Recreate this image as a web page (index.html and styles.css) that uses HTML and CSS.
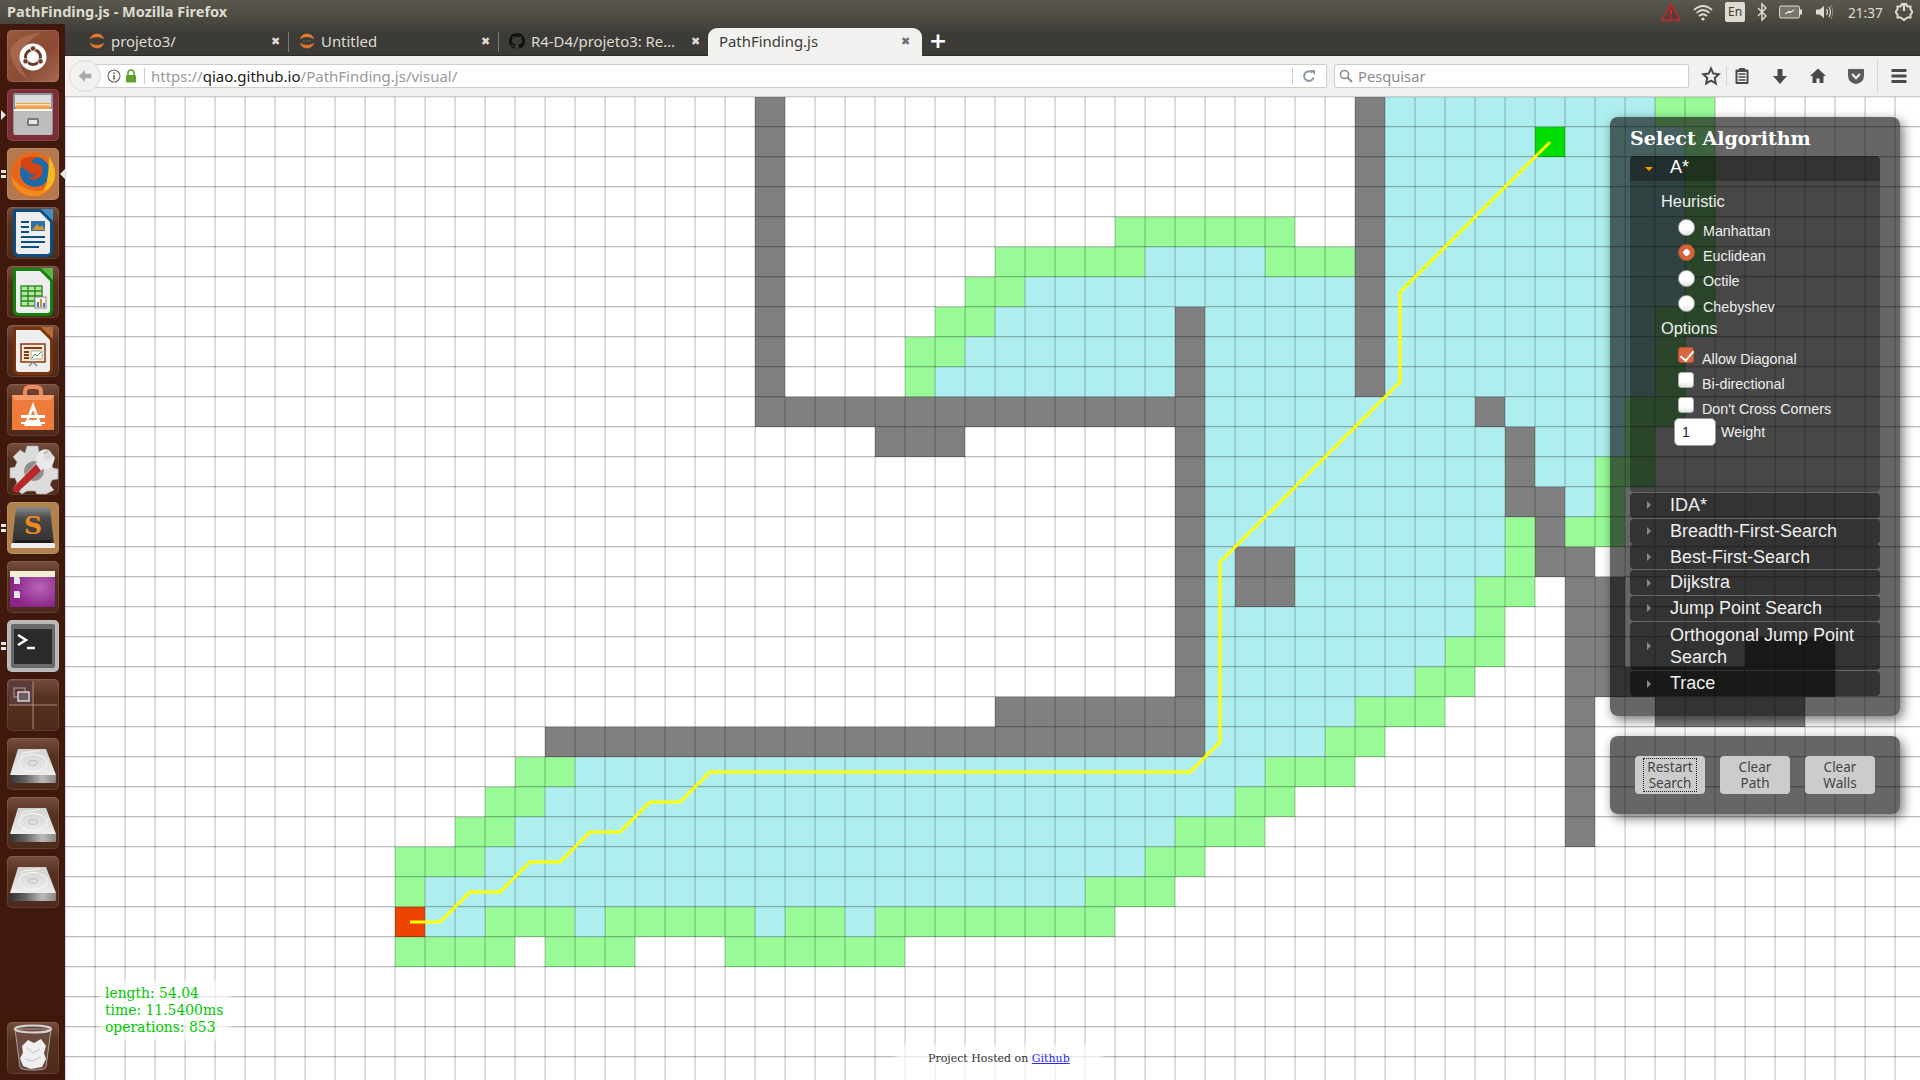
FILE: index.html
```html
<!DOCTYPE html>
<html lang="pt">
<head>
<meta charset="utf-8">
<title>PathFinding.js - Mozilla Firefox</title>
<link rel="stylesheet" href="styles.css">
</head>
<body>
<svg class="defs" width="0" height="0">
  <defs>
    <linearGradient id="diskTop" x1="0" y1="0" x2="0" y2="1"><stop offset="0" stop-color="#d2d2d0"/><stop offset="1" stop-color="#ededeb"/></linearGradient>
    <linearGradient id="diskFront" x1="0" y1="0" x2="1" y2="0"><stop offset="0" stop-color="#333"/><stop offset=".35" stop-color="#666"/><stop offset=".7" stop-color="#bbb"/><stop offset="1" stop-color="#888"/></linearGradient>
    <radialGradient id="purpleGlow" cx=".65" cy=".45" r=".6"><stop offset="0" stop-color="#b964b6"/><stop offset="1" stop-color="#8a2489"/></radialGradient>
    <linearGradient id="boxGrad" x1="0" y1="0" x2="0" y2="1"><stop offset="0" stop-color="#8a8a8a"/><stop offset=".3" stop-color="#4a4a4a"/><stop offset="1" stop-color="#2e2e2e"/></linearGradient>
    <symbol id="disk" viewBox="0 0 52 52">
      <path d="M11 11H39L49 37H3Z" fill="url(#diskTop)"/>
      <path d="M3 37H49V43.500Q49 45 47.500 45H4.500Q3 45 3 43.500Z" fill="url(#diskFront)"/>
      <ellipse cx="26" cy="25" rx="14" ry="8.500" fill="none" stroke="#f8f8f8" stroke-width="1"/>
      <ellipse cx="26" cy="25" rx="4.500" ry="2.300" fill="none" stroke="#bdbdbd" stroke-width="1"/>
      <path d="M15 20Q13 14 22 14T33 12" fill="none" stroke="#f7f7f7"/>
    </symbol>
    <symbol id="tabring" viewBox="0 0 16 16">
      <path d="M1.500 5.500A7 7 0 0 1 14.500 5.500A9 6 0 0 0 1.500 5.500Z" fill="#e8772e" stroke="#e8772e" stroke-width=".8"/>
      <path d="M1.500 10.500A7 7 0 0 0 14.500 10.500A9 6 0 0 1 1.500 10.500Z" fill="#e8772e" stroke="#e8772e" stroke-width=".8"/>
    </symbol>
    <pattern id="gridlines" width="30" height="30" patternUnits="userSpaceOnUse">
      <rect x="0" y="0" width="1" height="30" fill="#000" fill-opacity=".15"/>
      <rect x="29" y="0" width="1" height="30" fill="#000" fill-opacity=".12"/>
      <rect x="0" y="0" width="30" height="1" fill="#000" fill-opacity=".08"/>
      <rect x="0" y="29" width="30" height="1" fill="#000" fill-opacity=".27"/>
    </pattern>
  </defs>
</svg>

<div class="screen">
  <header class="titlebar">
    <span class="window-title">PathFinding.js - Mozilla Firefox</span>
    <div class="indicators">
      <svg class="ind" viewBox="0 0 20 20"><path d="M10 2L19 18H1Z" fill="#5a1a16" fill-opacity=".25" stroke="#d8232a" stroke-width="1.300"/><path d="M10 7V13M10 14.500V16" stroke="#d8232a" stroke-width="1.800"/></svg>
      <svg class="ind" viewBox="0 0 20 20"><path d="M1 8Q10 0 19 8M3.500 11Q10 5 16.500 11M6 14Q10 10.500 14 14" fill="none" stroke="#dfdbd2" stroke-width="1.700"/><circle cx="10" cy="17" r="1.600" fill="#dfdbd2"/></svg>
      <span class="lang">En</span>
      <svg class="ind-bt" viewBox="0 0 10 20"><path d="M1 6L9 14L5 18V2L9 6L1 14" fill="none" stroke="#dfdbd2" stroke-width="1.500"/></svg>
      <svg class="ind-bat" viewBox="0 0 23 14"><rect x=".5" y="1" width="20" height="12" rx="1.500" fill="#77756c" stroke="#dfdbd2"/><rect x="21" y="4.500" width="2" height="5" fill="#dfdbd2"/><path d="M6 9L11 6.500V8L15 5L10 7.500V6Z" fill="#fff" stroke="#fff" stroke-width=".6"/></svg>
      <svg class="ind" viewBox="0 0 20 20"><path d="M2 7.500H5.500L10 4V16L5.500 12.500H2Z" fill="#dfdbd2"/><path d="M12.500 7Q14.500 10 12.500 13M15 5Q18 10 15 15" fill="none" stroke="#dfdbd2" stroke-width="1.200"/><path d="M17 3Q20.500 10 17 17" fill="none" stroke="#8e8b82"/></svg>
      <span class="clock">21:37</span>
      <svg class="ind-pow" viewBox="0 0 18 20"><path d="M9 3.500L11 2L12.500 4.500L15.500 4.500L15.500 7.500L17.500 10L15.500 12.500L15.500 15.500L12.500 15.500L9 18L5.500 15.500L2.500 15.500L2.500 12.500L.5 10L2.500 7.500L2.500 4.500L5.500 4.500L7 2Z" fill="none" stroke="#dfdbd2" stroke-width="2"/><path d="M9 1V9" stroke="#dfdbd2" stroke-width="2.200"/></svg>
    </div>
  </header>

  <div class="below">
    <nav class="launcher">
      <div class="tile tile-dash">
        <svg viewBox="0 0 52 52"><path d="M3 20Q12 4 34 3Q20 10 14 24Q10 38 22 49Q6 42 3 20Z" fill="#b57a60" fill-opacity=".55"/><circle cx="26" cy="27" r="13.500" fill="#fff"/><circle cx="26" cy="27" r="7.500" fill="none" stroke="#6d3a26" stroke-width="3"/><circle cx="26" cy="18.500" r="2.700" fill="#6d3a26" stroke="#fff" stroke-width=".8"/><circle cx="18.500" cy="31.300" r="2.700" fill="#6d3a26" stroke="#fff" stroke-width=".8"/><circle cx="33.500" cy="31.300" r="2.700" fill="#6d3a26" stroke="#fff" stroke-width=".8"/></svg>
      </div>
      <div class="tile tile-files pip-left">
        <svg viewBox="0 0 52 52"><rect x="6" y="4" width="40" height="42" rx="2" fill="#8f9092"/><rect x="8" y="6" width="36" height="12" fill="#dcdcdc"/><rect x="9" y="14" width="34" height="6" fill="#f0a050"/><rect x="9" y="15" width="34" height="1.500" fill="#ffe0b0"/><path d="M7 21H45V44Q45 46 43 46H9Q7 46 7 44Z" fill="#bdbdbb"/><rect x="7" y="20" width="38" height="2" fill="#f5f5f5"/><rect x="20" y="29" width="12" height="8" rx="1.500" fill="#77787a"/><rect x="22" y="31" width="8" height="4" fill="#e8e8e8"/></svg>
      </div>
      <div class="tile tile-fox pip-pair pip-right">
        <svg viewBox="0 0 52 52"><circle cx="26" cy="26.500" r="22.500" fill="#e8661a"/><circle cx="28" cy="24" r="15" fill="#1c6aa8"/><path d="M14 12Q21 7 31 9Q24 11 25 15Q34 15 35 20Q37 28 30 31Q24 33 20 29Q26 31 28 27Q21 26 20 22Q13 21 14 12Z" fill="#d34415"/><path d="M42 9Q51 21 47 33Q42 45 30 48Q39 42 40 33Q42 22 42 9Z" fill="#f6b71f"/><path d="M4 28Q6 43 22 48Q34 50 42 41Q30 45 20 41Q10 37 4 28Z" fill="#f18b1d"/></svg>
      </div>
      <div class="tile">
        <svg viewBox="0 0 52 52"><path d="M6 2H34L46 14V44Q46 50 40 50H12Q6 50 6 44Z" fill="#0a4f82"/><path d="M9 5H33L43 15V44Q43 47 40 47H12Q9 47 9 44Z" fill="#eeeeee"/><path d="M34 2H46V14Z" fill="#3f8fc6"/><path d="M14 15H22M14 20H22M14 25H22M14 30H38M14 35H38M14 40H32" stroke="#0a4f82" stroke-width="2"/><rect x="24" y="14" width="14" height="10" fill="#2f6fa8"/><path d="M25 23L30 17L33 20L35 18L38 23Z" fill="#c89a3a"/></svg>
      </div>
      <div class="tile">
        <svg viewBox="0 0 52 52"><path d="M6 2H34L46 14V44Q46 50 40 50H12Q6 50 6 44Z" fill="#14800e"/><path d="M9 5H33L43 15V44Q43 47 40 47H12Q9 47 9 44Z" fill="#eeeeee"/><path d="M34 2H46V14Z" fill="#58b848"/><rect x="14" y="20" width="21" height="20" fill="#bde0a8" stroke="#1b8a12" stroke-width="1.300"/><path d="M14 25H35M14 30H35M14 35H35M21 20V40M28 20V40" stroke="#1b8a12" stroke-width="1.300"/><rect x="28" y="31" width="11" height="11" fill="#f4f4f4" stroke="#888"/><rect x="30" y="36" width="2" height="5" fill="#2f7fc0"/><rect x="33" y="33" width="2" height="8" fill="#e08a20"/><rect x="36" y="37" width="2" height="4" fill="#2f7fc0"/></svg>
      </div>
      <div class="tile">
        <svg viewBox="0 0 52 52"><path d="M6 2H34L46 14V44Q46 50 40 50H12Q6 50 6 44Z" fill="#7c3208"/><path d="M9 5H33L43 15V44Q43 47 40 47H12Q9 47 9 44Z" fill="#eeeeee"/><path d="M34 2H46V14Z" fill="#b86a3a"/><rect x="14" y="19" width="24" height="18" fill="#f7ead8" stroke="#8a3a10" stroke-width="1.500"/><path d="M17 23H35" stroke="#8a3a10" stroke-width="2"/><path d="M17 27H22M17 30H22M17 33H22" stroke="#8a3a10" stroke-width="1.800"/><rect x="24" y="26" width="11" height="8" fill="#fff" stroke="#888" stroke-width=".7"/><path d="M25 33L28 29L30 31L34 27" fill="none" stroke="#4a9a3a"/><path d="M26 37L22 41M26 37L30 41" stroke="#888" stroke-width="1.500"/></svg>
      </div>
      <div class="tile">
        <svg viewBox="0 0 52 52"><path d="M18 14V8Q18 3 23 3H29Q34 3 34 8V14" fill="none" stroke="#f08a5c" stroke-width="4"/><path d="M5 11H47V46H5Z" fill="#ee7a3c"/><path d="M5 11H47L44 16H8Z" fill="#f49a68"/><path d="M26 18L17 42H35Z" fill="#fff"/><path d="M26 26L22 36H30Z" fill="#ee7a3c"/><rect x="14" y="31" width="24" height="3" fill="#fff"/><rect x="14" y="38" width="24" height="2" fill="#fff"/></svg>
      </div>
      <div class="tile">
        <svg viewBox="0 0 52 52"><path d="M20 3H31L32 9L37 11L42 7L48 15L44 20L46 25L51 26V36L45 37L43 42L47 47L39 51H30L28 48H20L15 51L7 45L10 40L8 35H3V25L8 24L10 19L6 14L13 7L18 10Z" fill="#dcdcdc" stroke="#aaa" stroke-width=".6"/><circle cx="27" cy="28" r="10" fill="#8f8f8f"/><path d="M8 43Q5 47 9 49Q12 50 14 46L36 26Q43 27 46 21Q48 17 47 13L41 18L37 16L37 10L42 7Q36 5 32 9Q28 13 30 19Z" fill="#e9e9e9"/><path d="M6 45Q5 49 9 49.500Q12 50 14 46L34 28L29 21Z" fill="#b8282a"/></svg>
      </div>
      <div class="tile tile-sublime pip-pair">
        <svg viewBox="0 0 52 52"><path d="M9 5H43L47 43H5Z" fill="url(#boxGrad)"/><rect x="4" y="41" width="44" height="5" rx="1.500" fill="#eee"/><rect x="8" y="38" width="36" height="3" fill="#1c1c1c"/><text class="logo-s" x="26" y="32" text-anchor="middle">S</text></svg>
      </div>
      <div class="tile">
        <svg viewBox="0 0 52 52"><rect x="3" y="10" width="45" height="36" rx="1.500" fill="url(#purpleGlow)"/><rect x="3" y="10" width="45" height="6" fill="#f3efd4"/><path d="M7 16H12L13 18V23H7ZM7 30H12L13 32V37H7Z" fill="#e5e5e5"/></svg>
      </div>
      <div class="tile tile-term pip-pair">
        <svg viewBox="0 0 52 52"><rect x="4" y="4" width="44" height="44" rx="2" fill="#6a6a6a"/><rect x="7" y="9" width="38" height="35" fill="#2a2a2a"/><path d="M11 15L19 20L11 25" fill="none" stroke="#fff" stroke-width="2.500"/><path d="M20 28H28" stroke="#fff" stroke-width="2.500"/></svg>
      </div>
      <div class="tile">
        <svg viewBox="0 0 52 52"><rect x="2" y="2" width="24" height="24" fill="#5c3a3c"/><path d="M2 26H50M26 2V50" stroke="#a88d80" stroke-width="1"/><rect x="7" y="9" width="11" height="9" fill="none" stroke="#9d8e8e" stroke-width="1.200"/><rect x="11" y="13" width="11" height="9" fill="#6e5a62" stroke="#ddd" stroke-width="1.400"/></svg>
      </div>
      <div class="tile"><svg viewBox="0 0 52 52"><use href="#disk"/></svg></div>
      <div class="tile"><svg viewBox="0 0 52 52"><use href="#disk"/></svg></div>
      <div class="tile"><svg viewBox="0 0 52 52"><use href="#disk"/></svg></div>
      <div class="launcher-space"></div>
      <div class="tile">
        <svg viewBox="0 0 52 52"><path d="M8 7L13 45Q13 48 26 48T39 45L44 7Z" fill="#6d4a40" stroke="#a8a09c"/><ellipse cx="26" cy="7" rx="18" ry="3.500" fill="none" stroke="#d5d5d5" stroke-width="2.200"/><path d="M15 24L21 18L27 21L34 17L39 24L37 31L39 37L35 45L24 47L16 44L13 36L16 31Z" fill="#efefef"/><path d="M20 26L26 31L33 27M18 37L25 39L34 35" fill="none" stroke="#c5c5c5"/></svg>
      </div>
    </nav>

    <div class="browser">
      <div class="tabstrip">
        <div class="tab">
          <svg class="tab-icon" viewBox="0 0 16 16"><use href="#tabring"/></svg>
          <span class="tab-label">projeto3/</span>
          <span class="tab-close">✖</span>
        </div>
        <div class="tab">
          <svg class="tab-icon" viewBox="0 0 16 16"><use href="#tabring"/><path d="M4.500 8H5.500M7.500 8H8.500M10.500 8H11.500" stroke="#aaa" stroke-width="1.200"/></svg>
          <span class="tab-label">Untitled</span>
          <span class="tab-close">✖</span>
        </div>
        <div class="tab">
          <svg class="tab-icon" viewBox="0 0 16 16"><path fill="#111" d="M8 0C3.580 0 0 3.580 0 8c0 3.540 2.290 6.530 5.470 7.590.4.070.55-.17.55-.38 0-.19-.01-.82-.01-1.490-2.010.37-2.530-.49-2.690-.94-.09-.23-.48-.94-.82-1.130-.28-.15-.68-.52-.01-.53.63-.01 1.080.58 1.230.82.72 1.210 1.870.87 2.330.66.07-.52.28-.87.51-1.070-1.780-.2-3.640-.89-3.640-3.950 0-.87.31-1.590.82-2.150-.08-.2-.36-1.020.08-2.120 0 0 .67-.21 2.200.82.64-.18 1.320-.27 2-.27.68 0 1.360.09 2 .27 1.530-1.040 2.200-.82 2.200-.82.44 1.100.16 1.920.08 2.120.51.56.82 1.270.82 2.150 0 3.070-1.870 3.750-3.650 3.950.29.25.54.73.54 1.480 0 1.070-.01 1.930-.01 2.200 0 .21.15.46.55.38A8.013 8.013 0 0016 8c0-4.420-3.580-8-8-8z"/></svg>
          <span class="tab-label">R4-D4/projeto3: Re…</span>
          <span class="tab-close">✖</span>
        </div>
        <div class="tab tab-active">
          <span class="tab-label">PathFinding.js</span>
          <span class="tab-close">✖</span>
        </div>
        <span class="tab-new">+</span>
      </div>

      <div class="toolbar">
        <button class="back" aria-label="Voltar"><svg viewBox="0 0 20 20"><path d="M3 10L10 3.500V7.500H17V12.500H10V16.500Z" fill="#a9a9a9"/></svg></button>
        <div class="urlbar">
          <svg class="site-info" viewBox="0 0 14 14"><circle cx="7" cy="7" r="6" fill="none" stroke="#666" stroke-width="1.100"/><path d="M7 6V10.500M7 3.500V5" stroke="#555" stroke-width="1.500"/></svg>
          <svg class="site-lock" viewBox="0 0 12 14"><path d="M3 6V4Q3 1 6 1T9 4V6" fill="none" stroke="#5ea331" stroke-width="1.600"/><rect x="1" y="6" width="10" height="7.500" rx="1" fill="#5ea331"/></svg>
          <span class="url-sep"></span>
          <span class="url"><span class="url-dim">https://</span>qiao.github.io<span class="url-dim">/PathFinding.js/visual/</span></span>
          <span class="url-sep url-sep-end"></span>
          <svg class="reload" viewBox="0 0 14 14"><path d="M11.500 8.500A4.800 4.800 0 1 1 10 3.500" fill="none" stroke="#8a9aa6" stroke-width="2"/><path d="M8 1H13V6Z" fill="#8a9aa6"/></svg>
        </div>
        <div class="searchbar">
          <svg class="search-icon" viewBox="0 0 14 14"><circle cx="5.500" cy="5.500" r="4" fill="none" stroke="#8c8c8c" stroke-width="1.600"/><path d="M8.500 8.500L13 13" stroke="#8c8c8c" stroke-width="2"/></svg>
          <span class="search-text">Pesquisar</span>
        </div>
        <svg class="tool tool-star" viewBox="0 0 20 20"><path d="M10 2.500L12.300 7.600L17.800 8.200L13.700 11.900L14.800 17.400L10 14.600L5.200 17.400L6.300 11.900L2.200 8.200L7.700 7.600Z" fill="none" stroke="#4a4a4a" stroke-width="2"/></svg>
        <span class="tool-sep tool-sep-a"></span>
        <svg class="tool tool-clip" viewBox="0 0 20 20"><path d="M3.500 4.500Q3.500 3.500 4.500 3.500H7V2H13V3.500H15.500Q16.500 3.500 16.500 4.500V17Q16.500 18 15.500 18H4.500Q3.500 18 3.500 17Z" fill="#4a4a4a"/><rect x="5.500" y="6" width="9" height="10" fill="#f2f1ef"/><path d="M6.500 8H13.500M6.500 11H13.500M6.500 14H13.500" stroke="#4a4a4a" stroke-width="1.400"/></svg>
        <svg class="tool tool-next" viewBox="0 0 20 20"><path d="M7.500 3H12.500V10H17L10 18L3 10H7.500Z" fill="#4a4a4a"/></svg>
        <svg class="tool tool-next" viewBox="0 0 20 20"><path d="M10 2.500L18 10H15.500V17H11.500V12.500H8.500V17H4.500V10H2Z" fill="#4a4a4a"/></svg>
        <svg class="tool tool-next" viewBox="0 0 20 20"><path d="M3 3H17Q18 3 18 4V9Q18 17 10 18Q2 17 2 9V4Q2 3 3 3Z" fill="#5a5a5a"/><path d="M6 8L10 12L14 8" fill="none" stroke="#f2f1ef" stroke-width="2.400"/></svg>
        <span class="tool-sep tool-sep-b"></span>
        <svg class="tool tool-menu" viewBox="0 0 20 20"><path d="M2.500 4.500H17.500M2.500 10H17.500M2.500 15.500H17.500" stroke="#4a4a4a" stroke-width="3"/></svg>
      </div>

      <main class="stage">
        <svg class="grid" width="1855" height="983" xmlns="http://www.w3.org/2000/svg">
          <rect width="1855" height="983" fill="#fff"/>
          <g class="closed" transform="scale(30)">
            <rect x="44" y="0" width="9" height="10"/><rect x="53" y="1" width="1" height="6"/>
            <rect x="36" y="5" width="4" height="1"/><rect x="32" y="6" width="11" height="1"/>
            <rect x="31" y="7" width="6" height="1"/><rect x="38" y="7" width="5" height="1"/>
            <rect x="30" y="8" width="7" height="1"/><rect x="38" y="8" width="5" height="1"/>
            <rect x="29" y="9" width="8" height="1"/><rect x="38" y="9" width="5" height="1"/>
            <rect x="38" y="10" width="9" height="1"/><rect x="48" y="10" width="4" height="1"/>
            <rect x="38" y="11" width="10" height="1"/><rect x="49" y="11" width="3" height="1"/>
            <rect x="38" y="12" width="10" height="1"/><rect x="49" y="12" width="2" height="1"/>
            <rect x="38" y="13" width="10" height="1"/><rect x="50" y="13" width="1" height="1"/>
            <rect x="38" y="14" width="10" height="1"/>
            <rect x="38" y="15" width="1" height="1"/><rect x="41" y="15" width="7" height="1"/>
            <rect x="38" y="16" width="1" height="1"/><rect x="41" y="16" width="6" height="1"/>
            <rect x="38" y="17" width="9" height="1"/><rect x="38" y="18" width="8" height="1"/>
            <rect x="38" y="19" width="7" height="1"/><rect x="38" y="20" width="5" height="1"/>
            <rect x="38" y="21" width="4" height="1"/>
            <rect x="17" y="22" width="23" height="1"/><rect x="16" y="23" width="23" height="1"/>
            <rect x="15" y="24" width="22" height="1"/><rect x="14" y="25" width="22" height="1"/>
            <rect x="12" y="26" width="22" height="1"/>
            <rect x="12" y="27" width="2" height="1"/><rect x="17" y="27" width="1" height="1"/>
            <rect x="23" y="27" width="1" height="1"/><rect x="26" y="27" width="1" height="1"/>
          </g>
          <g class="opened" transform="scale(30)">
            <rect x="53" y="0" width="2" height="1"/><rect x="54" y="1" width="1" height="7"/>
            <rect x="53" y="7" width="1" height="4"/><rect x="52" y="10" width="1" height="3"/>
            <rect x="51" y="12" width="1" height="3"/><rect x="50" y="14" width="1" height="1"/>
            <rect x="35" y="4" width="6" height="1"/><rect x="31" y="5" width="5" height="1"/>
            <rect x="40" y="5" width="3" height="1"/><rect x="30" y="6" width="2" height="1"/>
            <rect x="29" y="7" width="2" height="1"/><rect x="28" y="8" width="2" height="1"/>
            <rect x="28" y="9" width="1" height="1"/>
            <rect x="48" y="14" width="1" height="2"/><rect x="47" y="16" width="2" height="1"/>
            <rect x="47" y="17" width="1" height="1"/><rect x="46" y="18" width="2" height="1"/>
            <rect x="45" y="19" width="2" height="1"/><rect x="43" y="20" width="3" height="1"/>
            <rect x="42" y="21" width="2" height="1"/>
            <rect x="15" y="22" width="2" height="1"/><rect x="40" y="22" width="3" height="1"/>
            <rect x="14" y="23" width="2" height="1"/><rect x="39" y="23" width="2" height="1"/>
            <rect x="13" y="24" width="2" height="1"/><rect x="37" y="24" width="3" height="1"/>
            <rect x="11" y="25" width="3" height="1"/><rect x="36" y="25" width="2" height="1"/>
            <rect x="11" y="26" width="1" height="1"/><rect x="34" y="26" width="3" height="1"/>
            <rect x="14" y="27" width="3" height="1"/><rect x="18" y="27" width="5" height="1"/>
            <rect x="24" y="27" width="2" height="1"/><rect x="27" y="27" width="8" height="1"/>
            <rect x="11" y="28" width="4" height="1"/><rect x="16" y="28" width="3" height="1"/>
            <rect x="22" y="28" width="6" height="1"/>
          </g>
          <g class="walls" transform="scale(30)">
            <rect x="23" y="0" width="1" height="11"/><rect x="24" y="10" width="14" height="1"/>
            <rect x="27" y="11" width="3" height="1"/><rect x="37" y="7" width="1" height="15"/>
            <rect x="31" y="20" width="6" height="1"/><rect x="16" y="21" width="21" height="1"/>
            <rect x="43" y="0" width="1" height="10"/><rect x="39" y="15" width="2" height="2"/>
            <rect x="47" y="10" width="1" height="1"/><rect x="48" y="11" width="1" height="3"/>
            <rect x="49" y="13" width="1" height="3"/><rect x="50" y="15" width="1" height="10"/>
            <rect x="51" y="16" width="1" height="4"/><rect x="52" y="19" width="7" height="1"/>
            <rect x="56" y="18" width="3" height="1"/><rect x="53" y="20" width="5" height="1"/>
          </g>
          <rect class="node-start" x="330" y="810" width="30" height="30"/>
          <rect class="node-end" x="1470" y="30" width="30" height="30"/>
          <rect width="1855" height="983" fill="url(#gridlines)"/>
          <polyline class="route" points="345,825 375,825 405,795 435,795 465,765 495,765 525,735 555,735 585,705 615,705 645,675 1125,675 1155,645 1155,465 1335,285 1335,195 1485,45"/>
        </svg>

        <section class="algo-panel">
          <h3 class="algo-title">Select Algorithm</h3>
          <div class="accordion">
            <h4 class="acc-head acc-open"><span class="caret caret-open"></span>A*</h4>
            <div class="acc-body">
              <div class="group-label">Heuristic</div>
              <label class="radio-row"><input type="radio" name="h"><span>Manhattan</span></label>
              <label class="radio-row"><input type="radio" name="h" checked><span>Euclidean</span></label>
              <label class="radio-row"><input type="radio" name="h"><span>Octile</span></label>
              <label class="radio-row"><input type="radio" name="h"><span>Chebyshev</span></label>
              <div class="group-label">Options</div>
              <label class="check-row"><input type="checkbox" checked><span>Allow Diagonal</span></label>
              <label class="check-row"><input type="checkbox"><span>Bi-directional</span></label>
              <label class="check-row"><input type="checkbox"><span>Don't Cross Corners</span></label>
              <label class="weight-row"><input type="text" value="1"><span>Weight</span></label>
            </div>
            <h4 class="acc-head"><span class="caret"></span>IDA*</h4>
            <h4 class="acc-head"><span class="caret"></span>Breadth-First-Search</h4>
            <h4 class="acc-head"><span class="caret"></span>Best-First-Search</h4>
            <h4 class="acc-head"><span class="caret"></span>Dijkstra</h4>
            <h4 class="acc-head"><span class="caret"></span>Jump Point Search</h4>
            <h4 class="acc-head"><span class="caret"></span>Orthogonal Jump Point Search</h4>
            <h4 class="acc-head"><span class="caret"></span>Trace</h4>
          </div>
        </section>

        <section class="ctrl-panel">
          <button class="ctrl ctrl-focus"><span>Restart Search</span></button>
          <button class="ctrl"><span>Clear Path</span></button>
          <button class="ctrl"><span>Clear Walls</span></button>
        </section>

        <div class="stats">length: 54.04<br>time: 11.5400ms<br>operations: 853</div>
        <div class="credit">Project Hosted on <a href="#">Github</a></div>
      </main>
    </div>
  </div>
</div>
</body>
</html>
```
FILE: styles.css
```css
* { box-sizing: border-box; }
html, body { margin: 0; height: 100%; overflow: hidden; }
body { font-family: "Noto Sans", sans-serif; background: #fff; }
.defs { position: absolute; }

.screen { display: flex; flex-direction: column; width: 1920px; height: 1080px; }

/* window title bar */
.titlebar {
  flex: 0 0 24px; display: flex; align-items: center; justify-content: space-between;
  padding: 0 7px; background: linear-gradient(#5b574c, #46453f);
}
.window-title { margin-top: -2px; font: bold 14.500px "Noto Sans", sans-serif; color: #dfdbd2; }
.indicators { display: flex; align-items: center; gap: 12px; }
.ind { width: 20px; height: 20px; display: block; }
.ind-bt { width: 10px; height: 20px; }
.ind-bat { width: 23px; height: 14px; }
.ind-pow { width: 18px; height: 20px; }
.lang {
  width: 20px; height: 20px; border-radius: 2px; background: #dfdbd2; color: #3c3b37;
  font: 12px/20px "Noto Sans", sans-serif; text-align: center;
}
.clock { font: 13.600px "Noto Sans", sans-serif; color: #dfdbd2; width: 35px; margin-left: 2px; white-space: nowrap; }

.below { flex: 1; display: flex; min-height: 0; }

/* launcher */
.launcher {
  flex: 0 0 65px; display: flex; flex-direction: column; align-items: center; gap: 7px;
  padding-top: 6px; background: #41190c;
}
.launcher-space { height: 100px; flex: none; }
.tile {
  position: relative; flex: 0 0 52px; width: 52px; height: 52px; border-radius: 5px;
  background: linear-gradient(#784d3e, #55311f 35%, #4e2a1c);
  box-shadow: inset 0 0 0 1px rgba(255,255,255,.1);
}
.tile svg { display: block; width: 52px; height: 52px; }
.tile-dash { background: linear-gradient(135deg, #9a5a40, #8a4a33 60%, #a96a52); }
.tile-files { background: #7d2f38; }
.tile-fox { background: #b47a4e; }
.tile-sublime { background: #b2824d; }
.tile-term { background: #b9b8b6; }
.logo-s { font: bold 25px "DejaVu Serif", serif; fill: #f08a1e; }
.pip-left::before, .pip-right::after {
  content: ""; position: absolute; top: 21px; border: 5px solid transparent;
}
.pip-left::before { left: -6px; border-left-color: #e8e8e8; border-right-width: 0; }
.pip-right::after { right: -6px; border-right-color: #e8e8e8; border-left-width: 0; }
.pip-pair::before {
  content: ""; position: absolute; left: -6px; top: 22px; width: 5px; height: 3px;
  background: #e8e8e8; box-shadow: 0 5px 0 #e8e8e8;
}

.browser { flex: 1; min-width: 0; display: flex; flex-direction: column; }

/* tabs */
.tabstrip {
  flex: 0 0 32px; display: flex; align-items: flex-end; padding-left: 10px;
  background: linear-gradient(#46453f, #3c3b37 30%); box-shadow: inset 0 -1px 0 #2c2b28;
}
.tab {
  position: relative; flex: none; width: 214px; height: 28px; display: flex; align-items: center;
  padding: 0 0 2px 14px; margin-right: -4px; color: #dfdbd2; font-size: 14.900px;
}
.tab:nth-child(-n+2)::after {
  content: ""; position: absolute; right: 0; top: 4px; width: 1px; height: 20px; background: #7a7972;
}
.tab:nth-child(3) { margin-right: -1px; }
.tab-icon { width: 16px; height: 16px; margin-right: 6px; flex: none; }
.tab-label { flex: 1; white-space: nowrap; overflow: hidden; }
.tab-close { font-size: 10.500px; width: 12px; margin-right: 8px; text-align: center; color: #dfdbd2; }
.tab-active {
  margin-right: 0; padding-left: 11px; background: #f2f1ef; color: #3c3b37;
  border-radius: 9px 9px 0 0;
}
.tab-active .tab-close { color: #6e6e6e; margin-right: 11px; }
.tab-new { width: 32px; height: 28px; color: #fff; font: bold 22px/26px "DejaVu Sans", sans-serif; text-align: center; }

/* toolbar */
.toolbar {
  flex: 0 0 41px; display: flex; align-items: center; padding: 0 0 1px 4px;
  background: #f2f1ef; border-bottom: 1px solid #cfcdca;
}
.back {
  position: relative; z-index: 1; flex: none; width: 32px; height: 32px; padding: 0 5px; border-radius: 50%;
  background: #f2f1ef; border: 1px solid #dcdad7; display: flex; align-items: center; justify-content: center;
}
.back svg { width: 18px; height: 18px; }
.urlbar {
  flex: none; display: flex; align-items: center; width: 1242px; height: 24px; margin-left: -16px;
  padding-left: 21px; background: #fff; border: 1px solid #cfcdca; border-radius: 0 2px 2px 0;
}
.site-info { width: 14px; height: 14px; flex: none; }
.site-lock { width: 12px; height: 14px; flex: none; margin-left: 4px; }
.url-sep { width: 1px; height: 16px; background: #cfcdca; margin-left: 7px; flex: none; }
.url { flex: 1; margin-left: 6px; font-size: 15px; color: #1a1a1a; white-space: nowrap; }
.url-dim { color: #999; }
.url-sep-end { margin: 0; }
.reload { width: 14px; height: 14px; margin: 0 10px 0 9px; flex: none; }
.searchbar {
  flex: none; display: flex; align-items: center; width: 355px; height: 24px; margin-left: 7px;
  padding-left: 4px; background: #fff; border: 1px solid #cfcdca; border-radius: 2px;
}
.search-icon { width: 14px; height: 14px; margin-right: 5px; }
.search-text { font-size: 14.700px; color: #8c8c8c; }
.tool { width: 20px; height: 20px; flex: none; }
.tool-star { margin-left: 12px; }
.tool-sep { width: 1px; height: 20px; background: #d8d6d3; flex: none; }
.tool-sep-a { margin: 0 5px; }
.tool-next { margin-left: 18px; }
.tool-sep-b { margin-left: 11px; height: 34px; }
.tool-menu { margin-left: 11px; }

/* grid stage */
.stage { position: relative; flex: 1; min-height: 0; overflow: hidden; }
.grid { display: block; }
.closed rect { fill: #afeeee; }
.opened rect { fill: #98fb98; }
.walls rect { fill: #808080; }
.node-start { fill: #ee4400; }
.node-end { fill: #00dd00; }
.route { fill: none; stroke: #ffff00; stroke-width: 3; }

/* panels */
.algo-panel, .ctrl-panel {
  position: absolute; left: 1545px; width: 290px; border-radius: 8px;
  background: rgba(0,0,0,.6); box-shadow: 3px 4px 12px rgba(0,0,0,.55);
}
.algo-panel { top: 20px; height: 599px; padding: 0 20px; color: #fff; }
.algo-title {
  margin: 0; height: 39px; font: bold 19.100px/44px "DejaVu Serif", serif; color: #fff; white-space: nowrap;
}
.accordion { font-family: "Liberation Sans", sans-serif; }
.acc-head {
  position: relative; margin: .8px 0 0; min-height: 25px; padding: 1.250px 10px 1.250px 40px;
  font: 18px/22.500px "Liberation Sans", sans-serif; color: #eee; border-radius: 4px;
  background: rgba(0,0,0,.5); display: flex; align-items: center;
}
.acc-head:nth-last-child(2) { padding-top: 1.750px; padding-bottom: 1.750px; }
.acc-open { height: 25px; margin-top: 0; padding: 0 10px 2px 40px; border-radius: 4px 4px 0 0; color: #fff; }
.caret {
  position: absolute; left: 17px; top: 50%; margin-top: -4px; border: 4px solid transparent;
  border-left: 4px solid #8a8a8a; border-right-width: 0;
}
.caret-open { margin-top: -2px; left: 15px; border: 4px solid transparent; border-top: 4px solid #f90; border-bottom-width: 0; }
.acc-body {
  height: 311px; padding: 8px 0 0 31px; background: rgba(0,0,0,.3); border-radius: 0 0 4px 4px;
  font-size: 14.300px; color: #eee;
}
.group-label { height: 24px; font: 16.400px/24px "Liberation Sans", sans-serif; color: #eee; }
.radio-row, .check-row { display: flex; align-items: center; height: 25.300px; padding-left: 17px; white-space: nowrap; }
.radio-row span { margin-left: 8px; padding-top: 6px; }
.check-row { height: 25px; padding-left: 17px; }
.check-row span { margin-left: 8px; padding-top: 8px; }
.group-label + .radio-row { margin-top: 2px; }
.radio-row + .group-label { height: 26px; }
.radio-row input, .check-row input { appearance: none; margin: 0; flex: none; background: linear-gradient(#fff 60%, #e4e4e4); border: 1px solid #aaa; }
.radio-row input { width: 17px; height: 17px; border-radius: 50%; }
.radio-row input:checked { background: radial-gradient(circle, #fff 0 3px, #d9633a 3.500px); border-color: #b4532f; }
.check-row input { position: relative; width: 16px; height: 16px; border-radius: 3px; }
.check-row input:checked { background: #d9663e; border-color: #b4532f; }
.check-row input:checked::after {
  content: ""; position: absolute; left: 4px; top: 0; width: 6px; height: 11px;
  border: solid #fff; border-width: 0 2.500px 2.500px 0; transform: rotate(40deg);
}
.weight-row { display: flex; align-items: center; height: 28px; margin-top: 1px; padding-left: 13px; }
.weight-row input {
  width: 42px; height: 28px; margin: 0; padding: 0 0 0 7px; border: 1px solid #999; border-radius: 5px;
  background: #fff; font: 14px "Liberation Sans", sans-serif; color: #222;
}
.weight-row span { margin-left: 5px; }

.ctrl-panel {
  top: 639px; height: 78px; display: flex; justify-content: center; gap: 15px; padding-top: 20px;
}
.ctrl {
  width: 70px; height: 38px; padding: 2px 8px; border: 0; border-radius: 4px; background: #ccc;
  font: 13.500px/16px "Noto Sans", sans-serif; color: #444;
}
.ctrl span { display: block; }
.ctrl-focus { position: relative; }
.ctrl-focus::after { content: ""; position: absolute; inset: 2px 8px; border: 1px dotted #222; }

.stats {
  position: absolute; left: 37px; top: 885px; padding: 3px; width: 126px; height: 56px;
  font: 13.900px/17px "DejaVu Serif", serif; color: #00c800; background: rgba(255,255,255,.7);
  box-shadow: 0 0 5px 2px rgba(255,255,255,.7); white-space: nowrap;
}
.credit {
  position: absolute; left: 833px; top: 950px; padding: 3px 30px 0; height: 33px;
  font: 11px/17px "DejaVu Serif", serif; color: #333; background: rgba(255,255,255,.7);
  box-shadow: 0 0 5px 2px rgba(255,255,255,.7); white-space: nowrap;
}
.credit a { color: #2a2aee; }
```
